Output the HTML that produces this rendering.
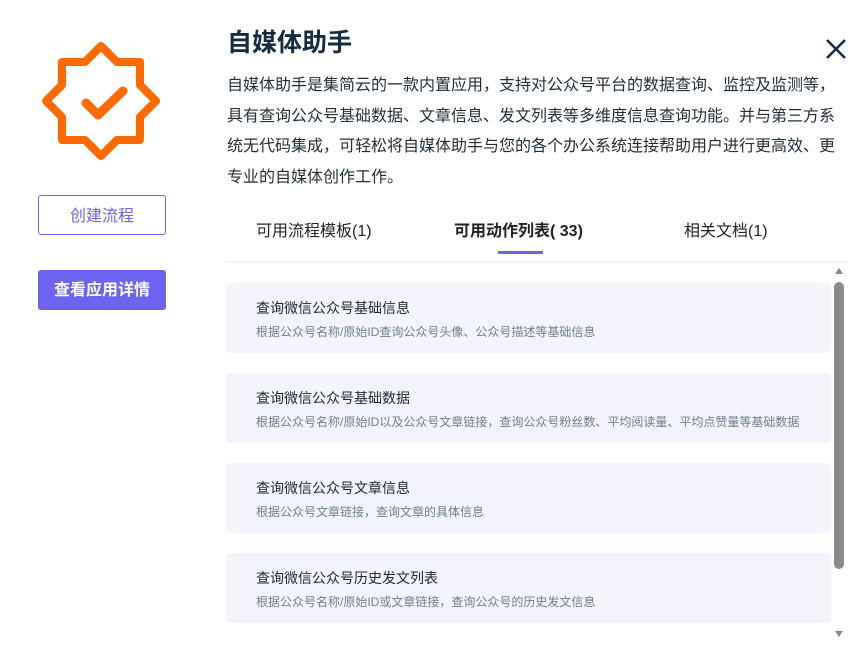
<!DOCTYPE html>
<html><head><meta charset="utf-8"><style>
body{margin:0;width:863px;height:662px;background:#fff;font-family:"Liberation Sans","Noto Sans CJK SC",sans-serif;position:relative;overflow:hidden}
.abs{position:absolute}
.btn1{left:38px;top:195px;width:126px;height:38px;border:1px solid #6c63f0;border-radius:3px;color:#6c63f0;font-size:16px;text-align:center;line-height:42px}
.btn2{left:38px;top:270px;width:128px;height:40px;background:#6c63f0;border-radius:3px;color:#fff;font-size:16px;font-weight:bold;text-align:center;line-height:41px}
h1{position:absolute;left:227px;top:27px;margin:0;font-size:25px;font-weight:bold;color:#152b40;line-height:32px}
.desc{left:227px;top:71px;width:620px;font-size:16px;line-height:30.5px;color:#1f2d3a}
.tab{top:221px;font-size:16px;color:#222;line-height:22px}
.card{left:226px;width:605px;height:70px;background:#f3f4fb;border-radius:4px}
.card .t{position:absolute;left:30px;top:15px;font-size:14px;color:#1c2530}
.card .d{position:absolute;left:30px;top:40px;font-size:12px;color:#6d7d8c}
</style></head><body>
<svg class="abs" style="left:0;top:0" width="200" height="200">
<path transform="translate(101,101)" d="M0,-55 L16,-39 L39,-39 L39,-16 L55,0 L39,16 L39,39 L16,39 L0,55 L-16,39 L-39,39 L-39,16 L-55,0 L-39,-16 L-39,-39 L-16,-39 Z" fill="none" stroke="#ff6a00" stroke-width="8" stroke-linejoin="round"/>
<path d="M86,103 L98,115 L123,91" fill="none" stroke="#ff6a00" stroke-width="9" stroke-linecap="round" stroke-linejoin="round"/>
</svg>
<div class="abs btn1">创建流程</div>
<div class="abs btn2">查看应用详情</div>
<h1>自媒体助手</h1>
<svg class="abs" style="left:824px;top:37px" width="24" height="24"><path d="M3,3 L21,21 M21,3 L3,21" stroke="#152b40" stroke-width="2.5"/></svg>
<div class="abs desc">自媒体助手是集简云的一款内置应用，支持对公众号平台的数据查询、监控及监测等，具有查询公众号基础数据、文章信息、发文列表等多维度信息查询功能。并与第三方系统无代码集成，可轻松将自媒体助手与您的各个办公系统连接帮助用户进行更高效、更专业的自媒体创作工作。</div>
<div class="abs tab" style="left:256px">可用流程模板(1)</div>
<div class="abs tab" style="left:454px;font-weight:bold">可用动作列表( 33)</div>
<div class="abs tab" style="left:684px">相关文档(1)</div>
<div class="abs" style="left:498px;top:251px;width:45px;height:3px;background:#6c63f0"></div>
<div class="abs" style="left:225px;top:261px;width:623px;height:2px;background:#f3f4f8"></div>
<div class="abs card" style="top:283px"><div class="t">查询微信公众号基础信息</div><div class="d">根据公众号名称/原始ID查询公众号头像、公众号描述等基础信息</div></div>
<div class="abs card" style="top:373px"><div class="t">查询微信公众号基础数据</div><div class="d">根据公众号名称/原始ID以及公众号文章链接，查询公众号粉丝数、平均阅读量、平均点赞量等基础数据</div></div>
<div class="abs card" style="top:463px"><div class="t">查询微信公众号文章信息</div><div class="d">根据公众号文章链接，查询文章的具体信息</div></div>
<div class="abs card" style="top:553px"><div class="t">查询微信公众号历史发文列表</div><div class="d">根据公众号名称/原始ID或文章链接，查询公众号的历史发文信息</div></div>
<svg class="abs" style="left:833px;top:265px" width="12" height="375">
<path d="M2,9 L6,3 L10,9 Z" fill="#888"/>
<rect x="1" y="17" width="10" height="287" rx="5" fill="#8a8a8a"/>
<path d="M2,366 L6,372 L10,366 Z" fill="#888"/>
</svg>
</body></html>
